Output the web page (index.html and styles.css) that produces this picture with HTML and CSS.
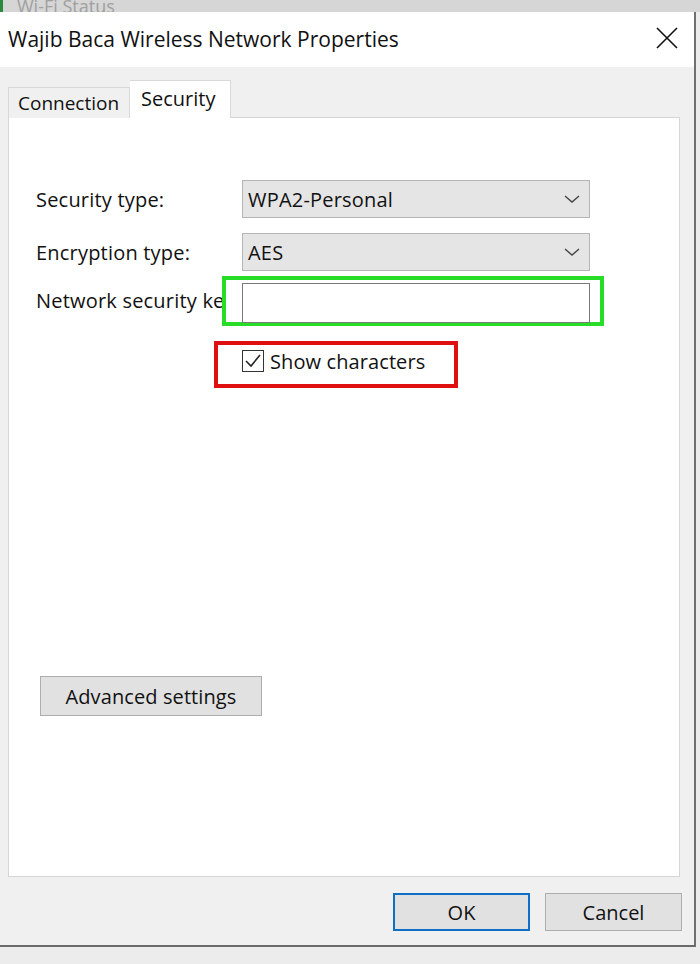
FILE: index.html
```html
<!DOCTYPE html>
<html>
<head>
<meta charset="utf-8">
<link rel="stylesheet" href="styles.css">
</head>
<body>
<div class="behind">
  <span class="behind-edge"></span>
  <span class="behind-title">Wi-Fi Status</span>
</div>
<div class="dialog">
  <div class="titlebar">
    <span class="title">Wajib Baca Wireless Network Properties</span>
    <svg class="close" width="24" height="24" viewBox="0 0 24 24"><path d="M2 2 L22 22 M22 2 L2 22" stroke="#111" stroke-width="1.6" fill="none"/></svg>
  </div>
  <div class="body">
    <div class="tabs">
      <div class="tab">Connection</div>
      <div class="tab active">Security</div>
    </div>
    <div class="panel">
      <div class="form">
        <div class="row">
          <div class="label">Security type:</div>
          <div class="combo"><span>WPA2-Personal</span><svg width="16" height="10" viewBox="0 0 16 10"><path d="M1 2 L8 8 L15 2" stroke="#444" stroke-width="1.4" fill="none"/></svg></div>
        </div>
        <div class="row">
          <div class="label">Encryption type:</div>
          <div class="combo"><span>AES</span><svg width="16" height="10" viewBox="0 0 16 10"><path d="M1 2 L8 8 L15 2" stroke="#444" stroke-width="1.4" fill="none"/></svg></div>
        </div>
        <div class="row">
          <div class="label key">Network security key</div>
          <div class="keywrap"><div class="keyinput"></div></div>
        </div>
        <div class="checkrow">
          <div class="checkwrap">
            <span class="checkbox"><svg width="20" height="20" viewBox="0 0 20 20"><path d="M3 10 L8 15 L17 4" stroke="#222" stroke-width="1.6" fill="none"/></svg></span>
            <span class="checktext">Show characters</span>
          </div>
        </div>
      </div>
      <div class="adv">Advanced settings</div>
    </div>
    <div class="footer">
      <div class="btn ok">OK</div>
      <div class="btn">Cancel</div>
    </div>
  </div>
</div>
</body>
</html>
```

FILE: styles.css
```css
html, body {
  margin: 0;
  padding: 0;
}
body {
  width: 700px;
  height: 964px;
  overflow: hidden;
  background: #ececec;
  font-family: "Open Sans", "Noto Sans", sans-serif;
  color: #111;
}
.behind {
  height: 12px;
  background: #d6d6d6;
  display: flex;
  align-items: flex-end;
  overflow: hidden;
}
.behind-edge {
  width: 3px;
  height: 12px;
  background: #2c8a3c;
}
.behind-title {
  margin-left: 14px;
  font-size: 18px;
  line-height: 12px;
  height: 12px;
  color: #a0a0a0;
}
.dialog {
  width: 696px;
  height: 935px;
  border-right: 2px solid #707070;
  border-bottom: 2px solid #6a6a6a;
  background: #f0f0f0;
  display: flex;
  flex-direction: column;
  box-sizing: border-box;
}
.titlebar {
  height: 55px;
  background: #fff;
  display: flex;
  align-items: center;
  justify-content: space-between;
  padding: 0 15px 0 8px;
  flex: none;
}
.title {
  font-size: 21px;
  color: #111;
  margin-top: -2px;
}
.close {
  margin-top: -4px;
}
.body {
  flex: 1;
  display: flex;
  flex-direction: column;
  padding: 13px 14px 0 8px;
}
.tabs {
  display: flex;
  align-items: flex-end;
  height: 38px;
  flex: none;
  position: relative;
  z-index: 1;
  margin-bottom: -1px;
}
.tab {
  height: 31px;
  box-sizing: border-box;
  border: 1px solid #d9d9d9;
  border-bottom: none;
  background: #f0f0f0;
  font-size: 19px;
  padding: 0 9px;
  display: flex;
  align-items: center;
  width: 122px;
}
.tab.active {
  height: 38px;
  background: #fff;
  width: 101px;
  border-left: none;
  padding: 0 11px;
  align-items: flex-start;
  padding-top: 4px;
  font-size: 20px;
}
.panel {
  height: 760px;
  flex: none;
  background: #fff;
  border: 1px solid #d5d5d5;
  box-sizing: border-box;
  padding: 62px 0 0 27px;
  display: flex;
  flex-direction: column;
}
.form {
  display: flex;
  flex-direction: column;
}
.row {
  display: flex;
  align-items: center;
  margin-bottom: 15px;
}
.row:nth-child(2) {
  margin-bottom: 12px;
}
.label {
  width: 206px;
  font-size: 20px;
  letter-spacing: 0.2px;
  flex: none;
  white-space: nowrap;
}
.label.key {
  margin-top: -6px;
}
.combo {
  width: 348px;
  height: 38px;
  box-sizing: border-box;
  background: #e5e5e5;
  border: 1px solid #b4b4b4;
  display: flex;
  align-items: center;
  justify-content: space-between;
  padding: 0 9px 0 5px;
  font-size: 20px;
  letter-spacing: 0.2px;
}
.keywrap {
  position: relative;
  width: 348px;
  height: 40px;
}
.keyinput {
  position: relative;
  z-index: 1;
  width: 348px;
  height: 40px;
  box-sizing: border-box;
  border: 1px solid #7a7a7a;
  background: #fff;
}
.keywrap::before {
  content: "";
  position: absolute;
  left: -20px;
  top: -7px;
  right: -14px;
  bottom: -3px;
  border: 4px solid #27dd27;
  background: #fff;
  box-sizing: border-box;
  pointer-events: none;
}
.checkrow {
  display: flex;
  padding-left: 206px;
  margin-top: 12px;
}
.checkwrap {
  position: relative;
  display: flex;
  align-items: center;
  height: 22px;
}
.checkwrap::before {
  content: "";
  position: absolute;
  left: -28px;
  top: -9px;
  width: 244px;
  height: 47px;
  border: 4px solid #e01010;
  box-sizing: border-box;
}
.checkbox {
  width: 22px;
  height: 22px;
  box-sizing: border-box;
  border: 1px solid #333;
  background: #fff;
  display: flex;
  align-items: center;
  justify-content: center;
}
.checktext {
  margin-left: 6px;
  font-size: 20px;
  letter-spacing: 0.1px;
}
.adv {
  margin-top: 304px;
  margin-left: 4px;
  width: 222px;
  height: 40px;
  box-sizing: border-box;
  background: #e1e1e1;
  border: 1px solid #adadad;
  display: flex;
  align-items: center;
  justify-content: center;
  font-size: 20px;
  letter-spacing: 0.1px;
}
.footer {
  display: flex;
  justify-content: flex-end;
  gap: 15px;
  padding-top: 16px;
  margin-right: -2px;
}
.btn {
  width: 137px;
  height: 38px;
  box-sizing: border-box;
  background: #e1e1e1;
  border: 1px solid #adadad;
  display: flex;
  align-items: center;
  justify-content: center;
  font-size: 20px;
}
.btn.ok {
  border: 2px solid #0f6fc6;
}
```
